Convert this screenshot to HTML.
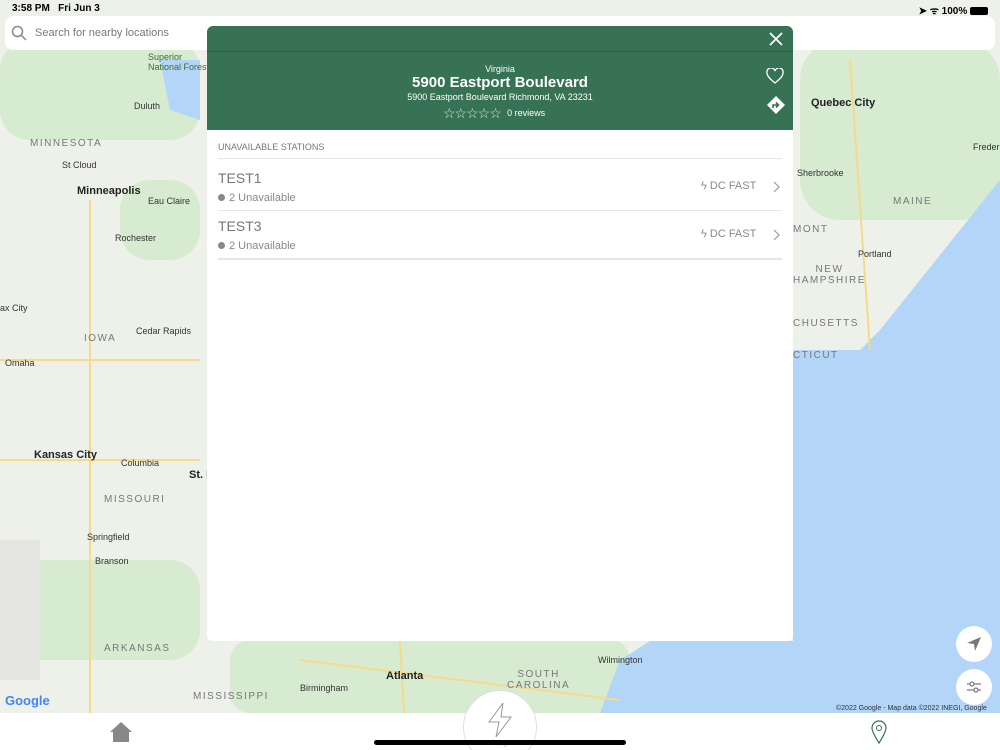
<!DOCTYPE html>
<html style="overflow:hidden;width:1000px;height:750px"><head><meta charset="utf-8"><style>
*{margin:0;padding:0;box-sizing:border-box}
body{width:1000px;height:750px;overflow:hidden;font-family:"Liberation Sans",sans-serif;position:relative;background:#eef0ec}
.map{position:absolute;left:0;top:0;width:1000px;height:713px;background:#eef1ea;overflow:hidden}
.lbl{position:absolute;font-size:9px;color:#333}
.st{position:absolute;font-size:10px;color:#777;letter-spacing:1.5px}
.big{position:absolute;font-size:11px;font-weight:bold;color:#222}
</style></head><body>
<div class="map">
<svg width="1000" height="713" style="position:absolute;left:0;top:0">
<rect x="0" y="0" width="1000" height="713" fill="#eef1ea"/>
<g fill="#d6ebd0">
<rect x="0" y="40" width="200" height="100" rx="30"/>
<rect x="120" y="180" width="80" height="80" rx="30"/>
<rect x="800" y="40" width="200" height="180" rx="40"/>
<rect x="0" y="560" width="200" height="100" rx="30"/>
<rect x="230" y="640" width="400" height="73" rx="20"/>
</g>
<rect x="0" y="540" width="40" height="140" fill="#e4e4e2"/>
<path d="M793 350 L860 350 L880 330 L1000 180 L1000 713 L600 713 L620 660 L650 641 L793 641 Z" fill="#b3d5f7"/>
<path d="M160 60 L200 60 L200 120 L170 110 Z" fill="#b3d5f7"/>
<g stroke="#f7d98a" stroke-width="2" fill="none">
<path d="M0 360 L200 360"/><path d="M90 200 L90 713"/><path d="M0 460 L200 460"/>
<path d="M300 660 L620 700"/><path d="M400 641 L404 713"/><path d="M850 60 L870 350"/>
</g>
</svg>
<div class="big" style="left:77px;top:185px">Minneapolis</div>
<div class="big" style="left:34px;top:449px">Kansas City</div>
<div class="big" style="left:811px;top:97px">Quebec City</div>
<div class="big" style="left:386px;top:670px">Atlanta</div>
<div class="big" style="left:189px;top:469px">St. L</div>
<div class="lbl" style="left:148px;top:52px;color:#3a6a3a">Superior<br>National Forest</div>
<div class="lbl" style="left:134px;top:101px">Duluth</div>
<div class="lbl" style="left:62px;top:160px">St Cloud</div>
<div class="lbl" style="left:148px;top:196px">Eau Claire</div>
<div class="lbl" style="left:115px;top:233px">Rochester</div>
<div class="lbl" style="left:136px;top:326px">Cedar Rapids</div>
<div class="lbl" style="left:5px;top:358px">Omaha</div>
<div class="lbl" style="left:121px;top:458px">Columbia</div>
<div class="lbl" style="left:87px;top:532px">Springfield</div>
<div class="lbl" style="left:95px;top:556px">Branson</div>
<div class="lbl" style="left:300px;top:683px">Birmingham</div>
<div class="lbl" style="left:598px;top:655px">Wilmington</div>
<div class="lbl" style="left:797px;top:168px">Sherbrooke</div>
<div class="lbl" style="left:858px;top:249px">Portland</div>
<div class="lbl" style="left:973px;top:142px">Frederi</div>
<div class="lbl" style="left:0px;top:303px">ax City</div>
<div class="st" style="left:30px;top:138px">MINNESOTA</div>
<div class="st" style="left:84px;top:333px">IOWA</div>
<div class="st" style="left:104px;top:494px">MISSOURI</div>
<div class="st" style="left:104px;top:643px">ARKANSAS</div>
<div class="st" style="left:193px;top:691px">MISSISSIPPI</div>
<div class="st" style="left:507px;top:669px;text-align:center">SOUTH<br>CAROLINA</div>
<div class="st" style="left:893px;top:196px">MAINE</div>
<div class="st" style="left:793px;top:224px">MONT</div>
<div class="st" style="left:793px;top:264px;text-align:center">NEW<br>HAMPSHIRE</div>
<div class="st" style="left:793px;top:318px">CHUSETTS</div>
<div class="st" style="left:793px;top:350px">CTICUT</div>
<div style="position:absolute;left:5px;top:693px;font-size:13px;font-weight:bold;color:#4285f4">Google</div>
<div style="position:absolute;left:836px;top:705px;font-size:7px;color:#333">©2022 Google - Map data ©2022 INEGI, Google</div>
</div>
<div style="position:absolute;left:12px;top:3px;font-size:10px;font-weight:bold;color:#000">3:58 PM&nbsp;&nbsp; Fri Jun 3</div>
<div style="position:absolute;right:12px;top:3px;font-size:10px;font-weight:bold;color:#000">➤ ᯤ 100% <span style="display:inline-block;width:18px;height:8px;background:#000;border-radius:2px;vertical-align:-1px"></span></div>
<div style="position:absolute;left:5px;top:16px;width:990px;height:34px;background:#fff;border-radius:8px"></div>
<svg style="position:absolute;left:11px;top:25px" width="16" height="16"><circle cx="6.5" cy="6.5" r="5" stroke="#888" stroke-width="1.5" fill="none"/><line x1="10" y1="10" x2="15" y2="15" stroke="#888" stroke-width="1.5"/></svg>
<div style="position:absolute;left:35px;top:27px;font-size:11px;color:#777">Search for nearby locations</div>
<div style="position:absolute;left:207px;top:26px;width:586px;height:615px;background:#fff;border-radius:6px;overflow:hidden">
<div style="height:104px;background:#377255;position:relative">
<div style="position:absolute;left:0;top:25px;width:100%;height:1px;background:#2b5c44"></div>
<svg style="position:absolute;left:562px;top:6px" width="14" height="14"><path d="M1 1L13 13M13 1L1 13" stroke="#fff" stroke-width="1.7"/></svg>
<div style="position:absolute;width:100%;top:38px;text-align:center;color:#fff;font-size:9px">Virginia</div>
<div style="position:absolute;width:100%;top:48px;text-align:center;color:#fff;font-size:15px;font-weight:bold">5900 Eastport Boulevard</div>
<div style="position:absolute;width:100%;top:66px;text-align:center;color:#fff;font-size:9px">5900 Eastport Boulevard Richmond, VA 23231</div>
<div style="position:absolute;left:236px;top:79px;color:#cfe0d6;font-size:14px;letter-spacing:0"><span style="letter-spacing:-1px">☆☆☆☆☆</span> <span style="font-size:9px;color:#fff;vertical-align:2px">&nbsp;0 reviews</span></div>
<svg style="position:absolute;left:559px;top:42px" width="18" height="16"><path d="M9 15C4 11 1 8 1 5A4 4 0 0 1 9 3A4 4 0 0 1 17 5C17 8 14 11 9 15Z" stroke="#fff" stroke-width="1.3" fill="none"/></svg>
<svg style="position:absolute;left:559px;top:69px" width="20" height="20"><path d="M10 1L19 10L10 19L1 10Z" fill="#fff"/><path d="M7 13V10H12M10 7.5L12.5 10L10 12.5" stroke="#377255" stroke-width="1.6" fill="none"/></svg>
</div>
<div style="position:absolute;left:11px;top:116px;font-size:9px;color:#777">UNAVAILABLE STATIONS</div>
<div style="position:absolute;left:11px;top:132px;width:564px;height:1px;background:#e6e6e6"></div>
<div style="position:absolute;left:11px;top:144px;font-size:14px;color:#777">TEST1</div>
<div style="position:absolute;left:11px;top:166px;font-size:11px;color:#888"><span style="display:inline-block;width:7px;height:7px;border-radius:50%;background:#888;margin-right:4px"></span>2 Unavailable</div>
<div style="position:absolute;left:494px;top:154px;font-size:11px;color:#888">ϟ DC FAST</div>
<svg style="position:absolute;left:566px;top:155px" width="8" height="12"><path d="M1 1L6 6L1 11" stroke="#999" fill="none" stroke-width="1.2"/></svg>
<div style="position:absolute;left:11px;top:184px;width:564px;height:1px;background:#e6e6e6"></div>
<div style="position:absolute;left:11px;top:192px;font-size:14px;color:#777">TEST3</div>
<div style="position:absolute;left:11px;top:214px;font-size:11px;color:#888"><span style="display:inline-block;width:7px;height:7px;border-radius:50%;background:#888;margin-right:4px"></span>2 Unavailable</div>
<div style="position:absolute;left:494px;top:202px;font-size:11px;color:#888">ϟ DC FAST</div>
<svg style="position:absolute;left:566px;top:203px" width="8" height="12"><path d="M1 1L6 6L1 11" stroke="#999" fill="none" stroke-width="1.2"/></svg>
<div style="position:absolute;left:11px;top:232px;width:564px;height:2px;background:#e6e6e6"></div>
</div>
<div style="position:absolute;left:956px;top:626px;width:36px;height:36px;border-radius:50%;background:#fff"></div>
<svg style="position:absolute;left:966px;top:636px" width="16" height="16"><path d="M15 1L1 7L8 8L9 15Z" fill="#777"/></svg>
<div style="position:absolute;left:956px;top:669px;width:36px;height:36px;border-radius:50%;background:#fff"></div>
<svg style="position:absolute;left:966px;top:679px" width="16" height="16" stroke="#777" fill="#fff" stroke-width="1.2"><line x1="1" y1="5" x2="15" y2="5"/><line x1="1" y1="11" x2="15" y2="11"/><circle cx="6" cy="5" r="2"/><circle cx="10" cy="11" r="2"/></svg>
<div style="position:absolute;left:0;top:713px;width:1000px;height:37px;background:#fff"></div>
<div style="position:absolute;left:0;top:0;width:1000px;height:750px;overflow:hidden;pointer-events:none">
<div style="position:absolute;left:463px;top:690px;width:74px;height:74px;border-radius:50%;background:#fff;border:1px solid #ddd"></div>
<svg style="position:absolute;left:486px;top:702px" width="28" height="36"><path d="M17 1L3 20H13L10 35L25 15H15Z" stroke="#999" fill="none" stroke-width="1"/></svg>
<div style="position:absolute;left:488px;top:740px;font-size:7px;color:#aaa">Charge</div>
<svg style="position:absolute;left:109px;top:721px" width="24" height="22"><path d="M12 1L23 11H20V21H4V11H1Z" fill="#888"/></svg>
<svg style="position:absolute;left:871px;top:720px" width="16" height="24"><path d="M8 23C3 15 1 11 1 8A7 7 0 0 1 15 8C15 11 13 15 8 23Z" stroke="#377255" fill="none" stroke-width="1.2"/><circle cx="8" cy="8" r="2.5" stroke="#377255" fill="none"/></svg>
<div style="position:absolute;left:374px;top:740px;width:252px;height:5px;border-radius:3px;background:#000"></div>
</div>
</body></html>
